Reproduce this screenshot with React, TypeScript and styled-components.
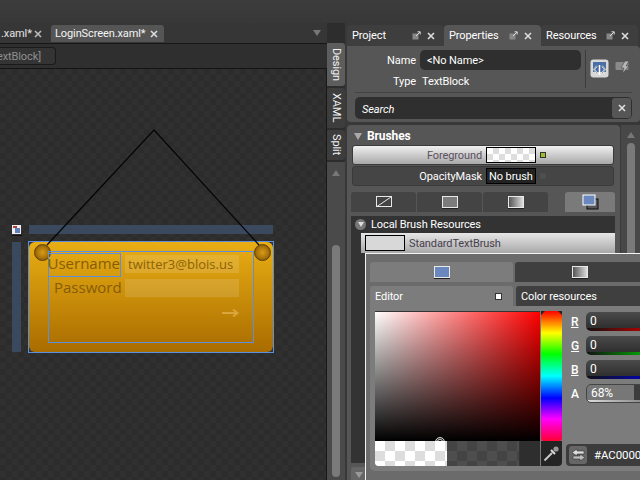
import React from 'react';
import styled, { createGlobalStyle } from 'styled-components';

const GlobalStyle = createGlobalStyle`
  html, body {
    margin: 0;
    padding: 0;
    background: #333;
    overflow: hidden;
  }
  * {
    box-sizing: border-box;
  }
`;

const Root = styled.div`
  position: relative;
  width: 640px;
  height: 480px;
  overflow: hidden;
  display: flex;
  flex-direction: column;
  background: #383838;
  color: #fff;
  font-family: Roboto, "Liberation Sans", sans-serif;
  font-size: 11px;
  letter-spacing: -0.1px;
`;

const TitleBar = styled.div`
  height: 23px;
  flex: none;
  background: linear-gradient(#3c3c3c, #383838);
`;

const Main = styled.div`
  flex: 1;
  min-height: 0;
  display: flex;
`;

const DocumentColumn = styled.div`
  width: 327px;
  flex: none;
  display: flex;
  flex-direction: column;
  overflow: hidden;
`;

const DocTabs = styled.div`
  height: 21px;
  flex: none;
  display: flex;
  align-items: flex-start;
  padding-top: 2px;
  gap: 3px;
  border-bottom: 1px solid #161616;
  position: relative;
  background: #363636;
`;

const DocTab = styled.div<{ $active?: boolean }>`
  height: 17px;
  width: ${p => (p.$active ? '113px' : '48px')};
  flex: none;
  display: flex;
  align-items: center;
  justify-content: space-between;
  padding: ${p => (p.$active ? '0 6px 0 4px' : '0 6px 0 1px')};
  border-radius: 3px 3px 0 0;
  background: ${p => (p.$active ? '#555' : 'transparent')};
  color: ${p => (p.$active ? '#f4f4f4' : '#e4e4e4')};
`;

const DocMenuArrow = styled.div`
  position: absolute;
  right: 6px;
  top: 7px;
  border-left: 4px solid transparent;
  border-right: 4px solid transparent;
  border-top: 6px solid #777;
`;

const CrumbBar = styled.div`
  height: 25px;
  flex: none;
  display: flex;
  align-items: center;
  background: #2f2f2f;
  border-bottom: 1px solid #141414;
`;

const Crumb = styled.div`
  width: 56px;
  height: 18px;
  display: flex;
  align-items: center;
  justify-content: flex-end;
  padding-right: 14px;
  white-space: nowrap;
  border: 1px solid #1a1a1a;
  border-left: 0;
  border-radius: 0 4px 4px 0;
  background: #343434;
  color: #8f8f8f;
`;

const Artboard = styled.div`
  flex: 1;
  position: relative;
  background-color: #2d2d2d;
  background-image: conic-gradient(#303030 25%, #2c2c2c 0 50%, #303030 0 75%, #2c2c2c 0);
  background-size: 12px 12px;
  border-right: 1px solid #181818;
`;

const Wires = styled.svg`
  position: absolute;
  left: 0;
  top: 0;
`;

const Guide = styled.div<{ $x: number; $y: number; $w: number; $h: number }>`
  position: absolute;
  left: ${p => p.$x}px;
  top: ${p => p.$y}px;
  width: ${p => p.$w}px;
  height: ${p => p.$h}px;
  background: #3b495f;
`;

const CornerGlyph = styled.svg`
  position: absolute;
  left: 12px;
  top: 156px;
`;

const LoginCard = styled.div`
  position: absolute;
  left: 28px;
  top: 172px;
  width: 246px;
  height: 112px;
  border: 1px solid #5b90e0;
  background: #34333a;
  font-family: "Open Sans", sans-serif;
  letter-spacing: 0;
`;

const CardFace = styled.div`
  width: 100%;
  height: 100%;
  border-radius: 6px;
  background: linear-gradient(#e9ae14, #a96c00);
`;

const Knob = styled.div<{ $x: number }>`
  position: absolute;
  left: ${p => p.$x}px;
  top: 2px;
  width: 17px;
  height: 17px;
  border-radius: 50%;
  background: radial-gradient(circle, #d89c18 0%, #a87208 55%, #5c3e04 100%);
  border: 1px solid #5c4208;
`;

const FormBox = styled.div`
  position: absolute;
  left: 19px;
  top: 9px;
  width: 206px;
  height: 92px;
  border: 1px solid #5b90e0;
`;

const FieldLabel = styled.div<{ $x: number; $y: number; $sel?: boolean }>`
  position: absolute;
  left: ${p => p.$x}px;
  top: ${p => p.$y}px;
  height: 24px;
  width: ${p => (p.$sel ? '73px' : 'auto')};
  padding-bottom: 4px;
  display: flex;
  align-items: center;
  justify-content: flex-end;
  color: #875c06;
  font-size: 15px;
  border: ${p => (p.$sel ? '1px solid #5b90e0' : '0')};
`;

const FieldInput = styled.div<{ $y: number }>`
  position: absolute;
  left: 76px;
  top: ${p => p.$y}px;
  width: 114px;
  height: 18px;
  padding-left: 3px;
  display: flex;
  align-items: center;
  background: rgba(255, 255, 255, 0.13);
  color: #8d6208;
  font-size: 13px;
`;

const SubmitArrow = styled.svg`
  position: absolute;
  left: 173px;
  top: 55px;
`;

const SideStrip = styled.div`
  width: 18px;
  flex: none;
  display: flex;
  flex-direction: column;
  padding-top: 20px;
  background: #2d2d2d;
`;

const ViewTab = styled.div<{ $active?: boolean; $h: number }>`
  height: ${p => p.$h}px;
  flex: none;
  margin-bottom: 2px;
  writing-mode: vertical-rl;
  display: flex;
  align-items: center;
  justify-content: center;
  border-radius: 0 3px 3px 0;
  background: ${p => (p.$active ? '#5d5d5d' : '#3d3d3d')};
  color: #f2f2f2;
`;

const StripScroll = styled.div`
  flex: 1;
  background: #4a4a4a;
  display: flex;
  flex-direction: column;
  align-items: center;
  padding: 8px 0 3px;
`;

const Arrow = styled.div<{ $down?: boolean }>`
  width: 0;
  height: 0;
  flex: none;
  border-left: 4px solid transparent;
  border-right: 4px solid transparent;
  border-bottom: ${p => (p.$down ? '0' : '6px solid #777')};
  border-top: ${p => (p.$down ? '6px solid #999' : '0')};
`;

const Thumb = styled.div<{ $top: number }>`
  width: 8px;
  flex: 1;
  margin-top: ${p => p.$top}px;
  border-radius: 4px;
  background: #7a7a7a;
`;

const InspectorColumn = styled.div`
  flex: 1;
  min-width: 0;
  display: flex;
  flex-direction: column;
  padding: 2px 0 0 2px;
  background: #383838;
`;

const PanelTabs = styled.div`
  height: 21px;
  flex: none;
  display: flex;
`;

const PanelTab = styled.div<{ $active?: boolean }>`
  width: 97px;
  flex: none;
  display: flex;
  align-items: center;
  padding: 0 9px 0 5px;
  border-radius: 4px 4px 0 0;
  background: ${p => (p.$active ? '#565656' : '#3e3e3e')};
`;

const TabName = styled.span`
  flex: 1;
`;

const TabTools = styled.span`
  display: flex;
  align-items: center;
  gap: 6px;
`;

const Identity = styled.div`
  flex: none;
  height: 76px;
  padding: 4px 8px 0 8px;
  background: #565656;
  border-radius: 0 4px 4px 4px;
`;

const IdentityTop = styled.div`
  display: flex;
  height: 43px;
  border-bottom: 1px solid #444;
`;

const NameFields = styled.div`
  width: 226px;
  flex: none;
  display: grid;
  grid-template-columns: 61px 1fr;
  grid-template-rows: 20px 21px;
  column-gap: 4px;
  align-items: center;
`;

const RowLabel = styled.div<{ $low?: boolean }>`
  text-align: right;
  padding-top: ${p => (p.$low ? '2px' : '0')};
`;

const NameInput = styled.div`
  height: 20px;
  padding-left: 7px;
  display: flex;
  align-items: center;
  border-radius: 5px;
  background: #2f2f2f;
`;

const TypeValue = styled.div`
  padding: 2px 0 0 2px;
`;

const ModeButtons = styled.div`
  flex: 1;
  margin: 0 0 4px 4px;
  padding: 9px 0 0 4px;
  border-left: 1px solid #3c3c3c;
  display: flex;
  gap: 6px;
`;

const SearchBox = styled.div`
  height: 22px;
  margin-top: 4px;
  display: flex;
  align-items: center;
  justify-content: space-between;
  padding-left: 7px;
  border-radius: 5px;
  background: #2f2f2f;
  font-style: italic;
`;

const SearchLabel = styled.span`
  padding-top: 2px;
`;

const ClearButton = styled.div`
  width: 19px;
  height: 20px;
  margin-right: 1px;
  display: flex;
  align-items: center;
  justify-content: center;
  border-radius: 3px;
  background: #565656;
`;

const BrushPanelWrap = styled.div`
  flex: 1;
  min-height: 0;
  margin-top: 3px;
  display: flex;
`;

const BrushPanel = styled.div`
  width: 273px;
  flex: none;
  padding: 2px 5px 0 4px;
  background: #565656;
  border-radius: 4px 4px 0 0;
  display: flex;
  flex-direction: column;
`;

const SectionHead = styled.div`
  height: 18px;
  flex: none;
  display: flex;
  align-items: center;
  gap: 5px;
  padding-left: 3px;
  font-weight: 700;
  font-size: 12px;
`;

const Caret = styled.div`
  border-left: 4px solid transparent;
  border-right: 4px solid transparent;
  border-top: 7px solid #aaa;
`;

const BrushRow = styled.div<{ $light?: boolean }>`
  height: 20px;
  flex: none;
  margin: 0 0 1px 1px;
  width: 262px;
  display: flex;
  align-items: center;
  border-radius: 3px;
  border: 1px solid #3a3a3a;
  background: ${p => (p.$light ? 'linear-gradient(#f0f0f0, #a8a8a8)' : '#454545')};
  color: ${p => (p.$light ? '#5a5060' : '#fff')};
`;

const BrushLabel = styled.div`
  width: 133px;
  text-align: right;
  padding-right: 4px;
  flex: none;
`;

const BrushValue = styled.div<{ $checker?: boolean }>`
  width: 50px;
  height: 16px;
  border: 1px solid #000;
  padding-left: 2px;
  display: flex;
  align-items: center;
  white-space: nowrap;
  background-color: ${p => (p.$checker ? '#fff' : '#222')};
  background-image: ${p =>
    p.$checker ? 'conic-gradient(#ddd 25%, #fff 0 50%, #ddd 0 75%, #fff 0)' : 'none'};
  background-size: 12px 12px;
  color: #fff;
`;

const Marker = styled.div<{ $on?: boolean }>`
  width: 6px;
  height: 6px;
  margin-left: 4px;
  background: ${p => (p.$on ? '#9bbd2e' : '#505050')};
  border: 1px solid ${p => (p.$on ? '#333' : '#4c4c4c')};
`;

const BrushTabs = styled.div`
  display: flex;
  gap: 1px;
  margin-top: 5px;
  height: 20px;
  flex: none;
`;

const BrushTab = styled.div<{ $active?: boolean }>`
  width: ${p => (p.$active ? '50px' : '65px')};
  margin-left: ${p => (p.$active ? 'auto' : '0')};
  display: flex;
  align-items: center;
  justify-content: center;
  border-radius: 3px 3px 0 0;
  background: ${p => (p.$active ? '#7a7a7a' : '#444')};
`;

const SwatchIcon = styled.div<{ $kind: 'flat' | 'fade' | 'blue' }>`
  width: 16px;
  height: 12px;
  border: 1px solid #e8e8e8;
  box-shadow: 0 1px 0 #222;
  background: ${p =>
    p.$kind === 'flat'
      ? '#7c7c7c'
      : p.$kind === 'fade'
        ? 'linear-gradient(to right, #555, #ddd)'
        : '#6a88bd'};
`;

const ResourceList = styled.div`
  margin: 4px 0;
  flex: 1;
  min-height: 0;
  background: #333;
`;

const ResourceHead = styled.div`
  height: 17px;
  display: flex;
  align-items: center;
  gap: 5px;
  padding-left: 4px;
`;

const RoundCaret = styled.div`
  width: 11px;
  height: 11px;
  border-radius: 50%;
  background: #777;
  display: flex;
  align-items: center;
  justify-content: center;
`;

const TinyCaret = styled.div`
  border-left: 3px solid transparent;
  border-right: 3px solid transparent;
  border-top: 5px solid #ddd;
`;

const ResourceRow = styled.div`
  height: 20px;
  margin-left: 10px;
  display: flex;
  align-items: center;
  gap: 4px;
  background: linear-gradient(#e6e6e6, #a8a8a8);
  color: #46404c;
`;

const ResourceSwatch = styled.div`
  width: 40px;
  height: 16px;
  margin-left: 4px;
  border: 1px solid #000;
  background: #d8d8d8;
`;

const ListFooter = styled.div`
  height: 13px;
  flex: none;
  width: 18px;
  padding: 5px 0 0 4px;
  background: #666;
  border-radius: 3px 3px 0 0;
`;

const PanelScroll = styled.div`
  flex: 1;
  background: #484848;
  display: flex;
  flex-direction: column;
  align-items: center;
  padding-top: 7px;
  border-left: 1px solid #3a3a3a;
`;

const ColorPopover = styled.div`
  position: absolute;
  left: 365px;
  top: 253px;
  width: 280px;
  height: 232px;
  padding: 8px 0 0 4px;
  display: flex;
  flex-direction: column;
  background: #6b6b6b;
  border: 1px solid #f4f4f4;
  border-right: 0;
`;

const PopTabs = styled.div`
  display: flex;
  gap: 2px;
  height: 20px;
  flex: none;
`;

const PopTab = styled.div<{ $active?: boolean }>`
  width: ${p => (p.$active ? '143px' : '130px')};
  flex: none;
  display: flex;
  align-items: center;
  justify-content: center;
  border-radius: 3px 3px 0 0;
  background: ${p => (p.$active ? '#7c7c7c' : '#3f3f3f')};
`;

const PopSubTabs = styled.div`
  display: flex;
  gap: 3px;
  height: 20px;
  flex: none;
  margin-top: 4px;
`;

const SubTab = styled.div<{ $active?: boolean }>`
  width: ${p => (p.$active ? '143px' : '130px')};
  flex: none;
  display: flex;
  align-items: center;
  justify-content: space-between;
  padding: 1px 11px 0 5px;
  border-radius: 3px 3px 0 0;
  background: ${p => (p.$active ? '#7c7c7c' : '#3f3f3f')};
`;

const SmallSquare = styled.div`
  width: 5px;
  height: 5px;
  background: #fff;
  border: 1px solid #333;
  box-sizing: content-box;
`;

const EditorBody = styled.div`
  height: 165px;
  flex: none;
  display: flex;
  padding: 5px 0 0 5px;
  background: #7c7c7c;
  border-radius: 0 0 0 5px;
`;

const PickerColumn = styled.div`
  width: 187px;
  flex: none;
  display: grid;
  grid-template-columns: 165px 21px;
  grid-template-rows: 130px 25px;
  column-gap: 1px;
`;

const SatValue = styled.div`
  position: relative;
  overflow: hidden;
  border-top: 1px solid #333;
  background: linear-gradient(to top, #000, rgba(0, 0, 0, 0)),
    linear-gradient(to right, #fff, #f00);
`;

const PickRing = styled.div`
  position: absolute;
  left: 60px;
  bottom: -6px;
  width: 10px;
  height: 10px;
  border-radius: 50%;
  border: 1px solid #ddd;
  box-shadow: inset 0 0 0 1px #222, inset 0 0 0 2px #ccc;
`;

const HueBar = styled.div`
  position: relative;
  border-radius: 0 0 3px 3px;
  background: linear-gradient(#f00, #ff0 17%, #0f0 33%, #0ff 50%, #00f 67%, #f0f 83%, #f03);
`;

const HueNotch = styled.div<{ $right?: boolean }>`
  position: absolute;
  top: 0;
  left: ${p => (p.$right ? 'auto' : '0')};
  right: ${p => (p.$right ? '0' : 'auto')};
  border-top: 4px solid #222;
  border-left: ${p => (p.$right ? '4px solid transparent' : '0')};
  border-right: ${p => (p.$right ? '0' : '4px solid transparent')};
`;

const AlphaStrip = styled.div`
  display: flex;
  background: #333;
  border-radius: 0 0 0 4px;
  overflow: hidden;
`;

const AlphaChecks = styled.div<{ $dark?: boolean }>`
  width: 72px;
  flex: none;
  background-color: ${p => (p.$dark ? '#444' : '#fff')};
  background-image: ${p =>
    p.$dark
      ? 'conic-gradient(#4e4e4e 25%, #444 0 50%, #4e4e4e 0 75%, #444 0)'
      : 'conic-gradient(#ddd 25%, #fff 0 50%, #ddd 0 75%, #fff 0)'};
  background-size: 20px 20px;
`;

const AlphaRest = styled.div`
  flex: 1;
  margin-left: 1px;
  background: #2e2e2e;
`;

const Dropper = styled.div`
  display: flex;
  align-items: center;
  justify-content: center;
  background: #242424;
  border-radius: 0 0 4px 0;
`;

const ChannelColumn = styled.div`
  flex: 1;
  padding: 1px 0 0 9px;
  display: flex;
  flex-direction: column;
  min-width: 0;
`;

const ChannelRow = styled.div`
  display: grid;
  grid-template-columns: 15px 70px;
  height: 19px;
  margin-bottom: 5px;
  align-items: center;
`;

const ChannelKey = styled.u<{ $plain?: boolean }>`
  text-decoration: ${p => (p.$plain ? 'none' : 'underline')};
  font-size: 12px;
  font-weight: 500;
`;

const ChannelField = styled.div<{ $tone: string }>`
  height: 19px;
  padding: 0 0 2px 4px;
  display: flex;
  align-items: center;
  border-radius: 5px 0 0 5px;
  background: linear-gradient(to right, #111, ${p => p.$tone}) bottom / 100% 3px no-repeat,
    linear-gradient(#4a4a4a, #2a2a2a);
  font-size: 12px;
`;

const AlphaField = styled.div`
  height: 19px;
  padding: 0 0 2px 4px;
  display: flex;
  align-items: center;
  border-radius: 5px 0 0 5px;
  border: 1px solid #444;
  background: linear-gradient(to right, #ddd, #777) bottom / 100% 2px no-repeat,
    linear-gradient(to right, #777 0 47px, #3c3c3c 47px);
  font-size: 12px;
`;

const HexRow = styled.div`
  margin: 36px 0 0 -5px;
  height: 22px;
  width: 90px;
  flex: none;
  display: flex;
  align-items: center;
  gap: 7px;
  padding-left: 3px;
  border-radius: 4px 0 0 4px;
  background: #3c3c3c;
  font-size: 11.5px;
  white-space: nowrap;
`;

const SwapButton = styled.div`
  width: 18px;
  height: 18px;
  flex: none;
  display: flex;
  align-items: center;
  justify-content: center;
  border-radius: 3px;
  background: #666;
`;

const CloseIcon = ({ color = '#ddd' }: { color?: string }) => (
  <svg width="8" height="8" viewBox="0 0 8 8">
    <path d="M1 1 L7 7 M7 1 L1 7" stroke={color} strokeWidth="1.6" />
  </svg>
);

const PopOutIcon = () => (
  <svg width="9" height="9" viewBox="0 0 9 9">
    <rect x="0.5" y="2.5" width="6" height="6" fill="#888" />
    <path d="M4 5 L8 1 M5.5 0.8 H8.2 V3.5" stroke="#ddd" strokeWidth="1" fill="none" />
  </svg>
);

const PanelTabTools = () => (
  <TabTools>
    <PopOutIcon />
    <CloseIcon />
  </TabTools>
);

const App: React.FC = () => (
  <Root>
    <GlobalStyle />
    <TitleBar />
    <Main>
      <DocumentColumn>
        <DocTabs>
          <DocTab>
            .xaml*
            <CloseIcon color="#bbb" />
          </DocTab>
          <DocTab $active>
            LoginScreen.xaml*
            <CloseIcon />
          </DocTab>
          <DocMenuArrow />
        </DocTabs>
        <CrumbBar>
          <Crumb>extBlock]</Crumb>
        </CrumbBar>
        <Artboard>
          <Guide $x={29} $y={156} $w={244} $h={9} />
          <Guide $x={12} $y={173} $w={9} $h={110} />
          <CornerGlyph width="10" height="12" viewBox="0 0 10 12">
            <rect x="0" y="0" width="9" height="9" fill="#eee" />
            <rect x="1" y="1" width="4" height="2" fill="#b04040" />
            <rect x="3" y="3" width="5" height="5" fill="#5f80b8" />
            <rect x="0" y="10" width="10" height="1" fill="#111" />
          </CornerGlyph>
          <LoginCard>
            <CardFace />
            <Knob $x={5} />
            <Knob $x={225} />
            <FormBox>
              <FieldLabel $x={-1} $y={1} $sel>Username</FieldLabel>
              <FieldLabel $x={5} $y={25}>Password</FieldLabel>
              <FieldInput $y={3}>twitter3@blois.us</FieldInput>
              <FieldInput $y={27} />
              <SubmitArrow width="18" height="12" viewBox="0 0 18 12">
                <path d="M0 6 H15 M11 2.5 L15.5 6 L11 9.5" stroke="#d9a63c" strokeWidth="2" fill="none" />
              </SubmitArrow>
            </FormBox>
          </LoginCard>
          <Wires width="326" height="200" viewBox="0 0 326 200">
            <path d="M47 176 L154 61 L259 176" stroke="#050505" strokeWidth="1.2" fill="none" />
          </Wires>
        </Artboard>
      </DocumentColumn>
      <SideStrip>
        <ViewTab $active $h={43}>Design</ViewTab>
        <ViewTab $h={40}>XAML</ViewTab>
        <ViewTab $h={30}>Split</ViewTab>
        <StripScroll>
          <Arrow />
          <Thumb $top={69} />
        </StripScroll>
      </SideStrip>
      <InspectorColumn>
        <PanelTabs>
          <PanelTab>
            <TabName>Project</TabName>
            <PanelTabTools />
          </PanelTab>
          <PanelTab $active>
            <TabName>Properties</TabName>
            <PanelTabTools />
          </PanelTab>
          <PanelTab>
            <TabName>Resources</TabName>
            <PanelTabTools />
          </PanelTab>
        </PanelTabs>
        <Identity>
          <IdentityTop>
            <NameFields>
              <RowLabel>Name</RowLabel>
              <NameInput>&lt;No Name&gt;</NameInput>
              <RowLabel $low>Type</RowLabel>
              <TypeValue>TextBlock</TypeValue>
            </NameFields>
            <ModeButtons>
              <svg width="19" height="20" viewBox="0 0 19 20">
                <rect x="0.5" y="0.5" width="18" height="18" rx="3" fill="#d8d8d8" />
                <rect x="3" y="3" width="13" height="10" fill="#4a6ea8" />
                <path d="M7 7 L4 10.5 L7 14 M12 7 L15 10.5 L12 14 M9.5 6 V16" stroke="#fff" strokeWidth="1.5" fill="none" />
                <path d="M7 7 L4 10.5 L7 14 M12 7 L15 10.5 L12 14" stroke="#222" strokeWidth="0.5" fill="none" />
              </svg>
              <svg width="16" height="18" viewBox="0 0 16 18">
                <rect x="0.5" y="3" width="13" height="8" rx="1" fill="#8a8a8a" />
                <path d="M10 2 L6 9 H9 L7 15 L14 7 H11 L14 2 Z" fill="#b8b8b8" stroke="#444" strokeWidth="0.6" />
              </svg>
            </ModeButtons>
          </IdentityTop>
          <SearchBox>
            <SearchLabel>Search</SearchLabel>
            <ClearButton>
              <CloseIcon />
            </ClearButton>
          </SearchBox>
        </Identity>
        <BrushPanelWrap>
          <BrushPanel>
            <SectionHead>
              <Caret />
              Brushes
            </SectionHead>
            <BrushRow $light>
              <BrushLabel>Foreground</BrushLabel>
              <BrushValue $checker />
              <Marker $on />
            </BrushRow>
            <BrushRow>
              <BrushLabel>OpacityMask</BrushLabel>
              <BrushValue>No brush</BrushValue>
              <Marker />
            </BrushRow>
            <BrushTabs>
              <BrushTab>
                <svg width="16" height="12" viewBox="0 0 16 12">
                  <rect x="0.5" y="0.5" width="15" height="10" fill="none" stroke="#e8e8e8" />
                  <path d="M1 10.5 L15 1" stroke="#e8e8e8" />
                </svg>
              </BrushTab>
              <BrushTab>
                <SwatchIcon $kind="flat" />
              </BrushTab>
              <BrushTab>
                <SwatchIcon $kind="fade" />
              </BrushTab>
              <BrushTab $active>
                <svg width="17" height="17" viewBox="0 0 17 17">
                  <rect x="5" y="5" width="11" height="10" fill="#555" stroke="#111" />
                  <rect x="1" y="1" width="12" height="10" fill="#6a88bd" stroke="#fff" />
                </svg>
              </BrushTab>
            </BrushTabs>
            <ResourceList>
              <ResourceHead>
                <RoundCaret>
                  <TinyCaret />
                </RoundCaret>
                Local Brush Resources
              </ResourceHead>
              <ResourceRow>
                <ResourceSwatch />
                StandardTextBrush
              </ResourceRow>
            </ResourceList>
            <ListFooter>
              <Arrow $down />
            </ListFooter>
          </BrushPanel>
          <PanelScroll>
            <Arrow />
            <Thumb $top={5} />
          </PanelScroll>
        </BrushPanelWrap>
      </InspectorColumn>
    </Main>
    <ColorPopover>
      <PopTabs>
        <PopTab $active>
          <SwatchIcon $kind="blue" />
        </PopTab>
        <PopTab>
          <SwatchIcon $kind="fade" />
        </PopTab>
      </PopTabs>
      <PopSubTabs>
        <SubTab $active>
          Editor
          <SmallSquare />
        </SubTab>
        <SubTab>Color resources</SubTab>
      </PopSubTabs>
      <EditorBody>
        <PickerColumn>
          <SatValue>
            <PickRing />
          </SatValue>
          <HueBar>
            <HueNotch />
            <HueNotch $right />
          </HueBar>
          <AlphaStrip>
            <AlphaChecks />
            <AlphaChecks $dark />
            <AlphaRest />
          </AlphaStrip>
          <Dropper>
            <svg width="17" height="17" viewBox="0 0 17 17">
              <path d="M1.5 15.5 L9 8" stroke="#c8c8c8" strokeWidth="2" />
              <path d="M8 5 L12 9" stroke="#ddd" strokeWidth="2" />
              <circle cx="13" cy="4" r="2.6" fill="#999" />
            </svg>
          </Dropper>
        </PickerColumn>
        <ChannelColumn>
          <ChannelRow>
            <ChannelKey>R</ChannelKey>
            <ChannelField $tone="#d00000">0</ChannelField>
          </ChannelRow>
          <ChannelRow>
            <ChannelKey>G</ChannelKey>
            <ChannelField $tone="#00c000">0</ChannelField>
          </ChannelRow>
          <ChannelRow>
            <ChannelKey>B</ChannelKey>
            <ChannelField $tone="#0000d0">0</ChannelField>
          </ChannelRow>
          <ChannelRow>
            <ChannelKey $plain>A</ChannelKey>
            <AlphaField>68%</AlphaField>
          </ChannelRow>
          <HexRow>
            <SwapButton>
              <svg width="15" height="14" viewBox="0 0 15 14">
                <path d="M6 1 L1 4.5 L6 8 V6 H13 V3 H6 Z" fill="#ddd" stroke="#333" strokeWidth="0.6" />
                <path d="M9 6 L14 9.5 L9 13 V11 H2 V8 H9 Z" fill="#bbb" stroke="#333" strokeWidth="0.6" />
              </svg>
            </SwapButton>
            #AC00000
          </HexRow>
        </ChannelColumn>
      </EditorBody>
    </ColorPopover>
  </Root>
);

export default App;
